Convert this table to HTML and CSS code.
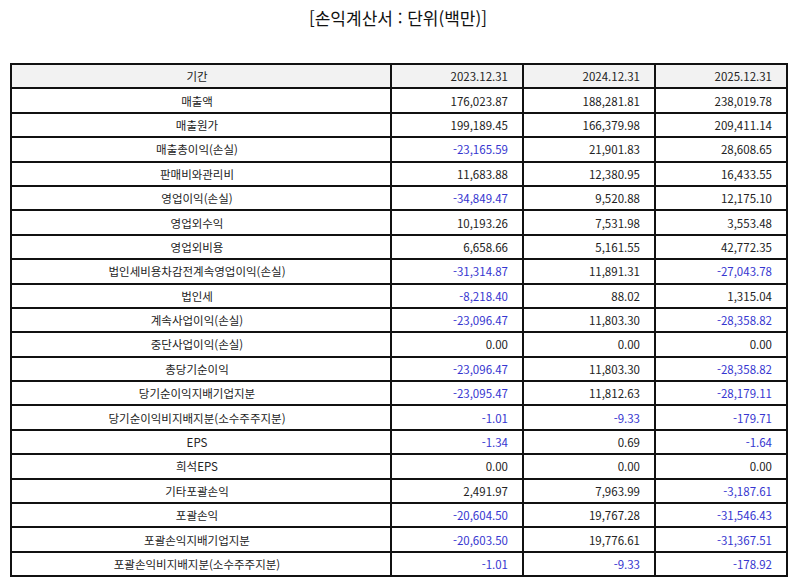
FILE: index.html
```html
<!DOCTYPE html>
<html lang="ko">
<head>
<meta charset="utf-8">
<link rel="stylesheet" href="styles.css">
</head>
<body>
<h1 class="title">[손익계산서 : 단위(백만)]</h1>
<table class="fin">
<colgroup><col class="c-label"><col class="c-num"><col class="c-num"><col class="c-num"></colgroup>
<thead>
<tr><th>기간</th><th class="num">2023.12.31</th><th class="num">2024.12.31</th><th class="num">2025.12.31</th></tr>
</thead>
<tbody>
<tr><td>매출액</td><td class="num">176,023.87</td><td class="num">188,281.81</td><td class="num">238,019.78</td></tr>
<tr><td>매출원가</td><td class="num">199,189.45</td><td class="num">166,379.98</td><td class="num">209,411.14</td></tr>
<tr><td>매출총이익(손실)</td><td class="num neg">-23,165.59</td><td class="num">21,901.83</td><td class="num">28,608.65</td></tr>
<tr><td>판매비와관리비</td><td class="num">11,683.88</td><td class="num">12,380.95</td><td class="num">16,433.55</td></tr>
<tr><td>영업이익(손실)</td><td class="num neg">-34,849.47</td><td class="num">9,520.88</td><td class="num">12,175.10</td></tr>
<tr><td>영업외수익</td><td class="num">10,193.26</td><td class="num">7,531.98</td><td class="num">3,553.48</td></tr>
<tr><td>영업외비용</td><td class="num">6,658.66</td><td class="num">5,161.55</td><td class="num">42,772.35</td></tr>
<tr><td>법인세비용차감전계속영업이익(손실)</td><td class="num neg">-31,314.87</td><td class="num">11,891.31</td><td class="num neg">-27,043.78</td></tr>
<tr><td>법인세</td><td class="num neg">-8,218.40</td><td class="num">88.02</td><td class="num">1,315.04</td></tr>
<tr><td>계속사업이익(손실)</td><td class="num neg">-23,096.47</td><td class="num">11,803.30</td><td class="num neg">-28,358.82</td></tr>
<tr><td>중단사업이익(손실)</td><td class="num">0.00</td><td class="num">0.00</td><td class="num">0.00</td></tr>
<tr><td>총당기순이익</td><td class="num neg">-23,096.47</td><td class="num">11,803.30</td><td class="num neg">-28,358.82</td></tr>
<tr><td>당기순이익지배기업지분</td><td class="num neg">-23,095.47</td><td class="num">11,812.63</td><td class="num neg">-28,179.11</td></tr>
<tr><td>당기순이익비지배지분(소수주주지분)</td><td class="num neg">-1.01</td><td class="num neg">-9.33</td><td class="num neg">-179.71</td></tr>
<tr><td>EPS</td><td class="num neg">-1.34</td><td class="num">0.69</td><td class="num neg">-1.64</td></tr>
<tr><td>희석EPS</td><td class="num">0.00</td><td class="num">0.00</td><td class="num">0.00</td></tr>
<tr><td>기타포괄손익</td><td class="num">2,491.97</td><td class="num">7,963.99</td><td class="num neg">-3,187.61</td></tr>
<tr><td>포괄손익</td><td class="num neg">-20,604.50</td><td class="num">19,767.28</td><td class="num neg">-31,546.43</td></tr>
<tr><td>포괄손익지배기업지분</td><td class="num neg">-20,603.50</td><td class="num">19,776.61</td><td class="num neg">-31,367.51</td></tr>
<tr><td>포괄손익비지배지분(소수주주지분)</td><td class="num neg">-1.01</td><td class="num neg">-9.33</td><td class="num neg">-178.92</td></tr>
</tbody>
</table>
</body>
</html>
```
FILE: styles.css
```css
html, body {
  margin: 0;
  padding: 0;
  background: #ffffff;
}
body {
  padding: 0 8px 0 10px;
  font-family: "Noto Sans CJK KR", "Noto Sans", sans-serif;
  color: #222222;
}
.title {
  margin: 0;
  padding-top: 6px;
  height: 63px;
  box-sizing: border-box;
  font-size: 17px;
  font-weight: 400;
  line-height: 24px;
  text-align: center;
  color: #111111;
}
.fin {
  width: 776px;
  border-collapse: collapse;
  table-layout: fixed;
  font-size: 11.5px;
}
.c-label { width: 380px; }
.c-num { width: 132px; }
.fin th, .fin td {
  border: 2px solid #111111;
  height: 22.4px;
  padding: 0 14px 0 6px;
  text-align: center;
  font-weight: 400;
  line-height: 14px;
  white-space: nowrap;
}
.fin th {
  background: #f2f2f2;
}
.fin .num {
  text-align: right;
}
.fin .neg {
  color: #3636d0;
}
```
